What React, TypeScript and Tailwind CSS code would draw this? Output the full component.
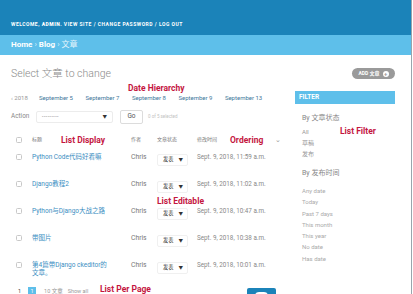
import React from 'react';

const rows = [
  { title: ['Python Code代码好看嘛'], date: 'Sept. 9, 2018, 11:59 a.m.' },
  { title: ['Django教程2'], date: 'Sept. 9, 2018, 11:02 a.m.' },
  { title: ['Python与Django大战之路'], date: 'Sept. 9, 2018, 10:47 a.m.' },
  { title: ['带图片'], date: 'Sept. 9, 2018, 10:38 a.m.' },
  { title: ['第4篇带Django ckeditor的', '文章。'], date: 'Sept. 9, 2018, 10:01 a.m.' },
];

const dates = ['September 5', 'September 7', 'September 8', 'September 9', 'September 13'];
const dateFilters = ['Any date', 'Today', 'Past 7 days', 'This month', 'This year', 'No date', 'Has date'];

const Note: React.FC<{ className: string; children: React.ReactNode }> = ({ className, children }) => (
  <span className={`absolute text-[8.5px] leading-[10px] font-bold text-[#c4163f] whitespace-nowrap ${className}`}>
    {children}
  </span>
);

const Checkbox = () => <div className="w-[6px] h-[6px] rounded-[1.5px] border border-[#c8c8c8] bg-white" />;

const App: React.FC = () => {
  return (
    <div
      className="relative w-[412px] h-[294px] overflow-hidden bg-white border-r border-[#9aa5ad]"
      style={{ fontFamily: 'Roboto, "Noto Sans CJK SC", "Liberation Sans", sans-serif' }}
    >
      {/* Header */}
      <div className="h-[35px] bg-[#1b83b9] flex items-end pb-[8px] pl-[11px]">
        <span className="text-[5px] leading-[6px] tracking-[0.5px] text-white uppercase font-bold">
          Welcome, <span className="font-black">admin</span>. View site / Change password / Log out
        </span>
      </div>

      {/* Breadcrumbs */}
      <div className="h-[20px] bg-[#5ebfea] flex items-center pl-[11px] text-[8px] text-white">
        <span className="font-bold">Home</span>
        <span className="mx-[2px] text-[#d8f0fb]">›</span>
        <span className="font-bold">Blog</span>
        <span className="mx-[2px] text-[#d8f0fb]">›</span>
        <span className="text-[#e6f5fc]">文章</span>
      </div>

      {/* Title row */}
      <div className="mt-[13px] h-[11px] flex items-center pl-[11px] pr-[16px]">
        <h1 className="text-[10.5px] font-light text-[#8a8a8a] leading-[11px]">Select 文章 to change</h1>
        <div className="ml-auto w-[43px] h-[11px] rounded-full bg-[#9a9a9a] flex items-center justify-center gap-[3px] text-white text-[5px] font-bold">
          <span>ADD 文章</span>
          <span className="w-[6px] h-[6px] rounded-full bg-white text-[#9a9a9a] flex items-center justify-center text-[6px] leading-none">+</span>
        </div>
      </div>

      <div className="flex pl-[11px] pr-[16px]">
        {/* Main column */}
        <div className="w-[276px]">
          {/* Date hierarchy */}
          <div className="mt-[13px] h-[10px] flex items-center text-[6px] text-[#41789b]">
            <span className="text-[#999] w-[28px]">‹ 2018</span>
            <div className="flex gap-[12.5px]">
              {dates.map((d) => (
                <span key={d}>{d}</span>
              ))}
            </div>
          </div>

          {/* Actions */}
          <div className="mt-[8px] h-[14px] flex items-center">
            <span className="text-[6.4px] text-[#888] w-[25px]">Action</span>
            <div className="w-[77px] h-[12px] border border-[#ececec] rounded-[2px] flex items-center px-[5px] text-[5px] text-[#666]">
              <span className="tracking-[0.5px]">---------</span>
              <span className="ml-auto text-[4.5px] text-[#333]">▼</span>
            </div>
            <div className="ml-[7px] w-[23px] h-[14px] border border-[#dcdcdc] rounded-[2px] flex items-center justify-center text-[6.5px] text-[#555]">
              Go
            </div>
            <span className="ml-[5px] text-[4.5px] text-[#c2c2c2]">0 of 5 selected</span>
          </div>

          {/* Table header */}
          <div className="mt-[9px] h-[14px] flex items-center text-[5px] text-[#777]">
            <div className="w-[21px] pl-[5px]">
              <Checkbox />
            </div>
            <span className="w-[99px]">标题</span>
            <span className="w-[26px]">作者</span>
            <span className="w-[40px]">文章状态</span>
            <span className="w-[78px]">修改时间</span>
            <span className="text-[7px] text-[#999]">⌄</span>
          </div>

          {/* Rows */}
          <div className="mt-[5px]">
            {rows.map((r, i) => (
              <div key={i} className={`flex items-start ${i === rows.length - 1 ? 'h-[26px]' : 'h-[27px]'}`}>
                <div className="w-[21px] pl-[5px] pt-[2px]">
                  <Checkbox />
                </div>
                <div className="w-[99px] text-[6.5px] leading-[8px] pt-[1px] text-[#3b8ec2]">
                  {r.title.map((t) => (
                    <div key={t}>{t}</div>
                  ))}
                </div>
                <div className="w-[26px] text-[6.8px] leading-[8px] pt-[1px] text-[#777]">Chris</div>
                <div className="w-[40px] pt-[1px]">
                  <div className="mt-[1px] w-[31px] h-[12px] border border-[#f0f0f0] rounded-[2px] flex items-center pl-[5px] pr-[4px] text-[5.2px] text-[#333]">
                    <span>发表</span>
                    <span className="ml-auto text-[4.5px]">▼</span>
                  </div>
                </div>
                <div className="text-[6.3px] leading-[8px] pt-[1px] text-[#888]">{r.date}</div>
              </div>
            ))}
          </div>

          {/* Pagination */}
          <div className="h-[10px] flex items-center text-[5.5px] text-[#999]">
            <span className="ml-[7px] text-[#444]">1</span>
            <span className="ml-[7px] w-[8px] h-[8px] bg-[#5ebfea] text-white flex items-center justify-center">1</span>
            <span className="ml-[8px]">10 文章</span>
            <span className="ml-[5px]">Show all</span>
            <div className="ml-auto mr-[11px] mt-[5px] w-[29px] h-[12px] rounded-[2px] bg-[#1b83b9] flex justify-center pt-[4px]">
              <div className="w-[13px] h-[8px] rounded-full bg-white" />
            </div>
          </div>
        </div>

        {/* Filter sidebar */}
        <div className="ml-auto w-[100px]">
          <div className="mt-[12px] h-[13px] bg-[#5ebfea] flex items-center pl-[4px] text-[6.5px] font-bold text-white">
            FILTER
          </div>
          <div className="pl-[7px]">
            <div className="mt-[9px] text-[7px] leading-[10px] text-[#888]">By 文章状态</div>
            <div className="mt-[2.5px] text-[6px] leading-[11px] text-[#999]">
              <div>All</div>
              <div>草稿</div>
              <div>发布</div>
            </div>
            <div className="mt-[9.5px] text-[7px] leading-[10px] text-[#888]">By 发布时间</div>
            <div className="mt-[7px] text-[6px] leading-[11.3px] text-[#aaa]">
              {dateFilters.map((d) => (
                <div key={d}>{d}</div>
              ))}
            </div>
          </div>
        </div>
      </div>

      {/* Annotations */}
      <Note className="left-[128px] top-[83px]">Date Hierarchy</Note>
      <Note className="left-[61px] top-[135px]">List Display</Note>
      <Note className="left-[230px] top-[135px]">Ordering</Note>
      <Note className="left-[157px] top-[196px]">List Editable</Note>
      <Note className="left-[340px] top-[126px]">List Filter</Note>
      <Note className="left-[100px] top-[284px]">List Per Page</Note>
    </div>
  );
};

export default App;
